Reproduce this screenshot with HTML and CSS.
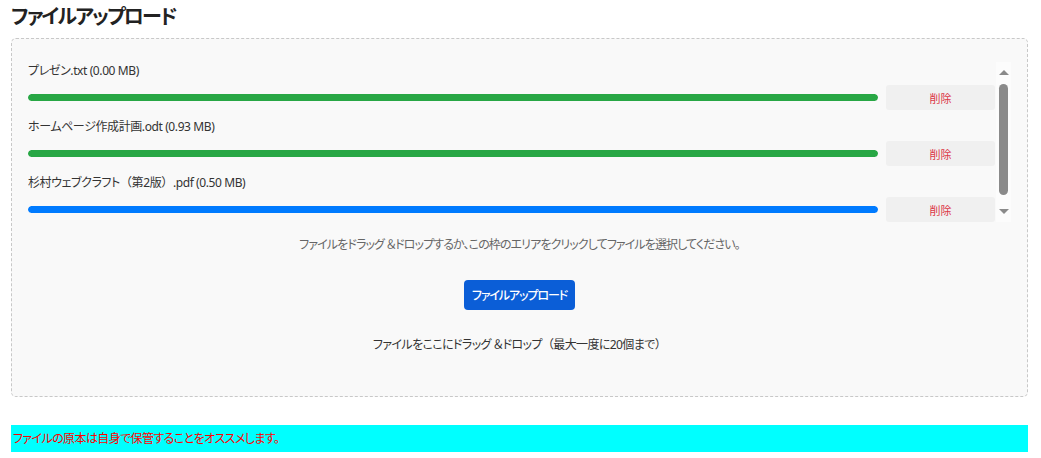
FILE: index.html
```html
<!DOCTYPE html>
<html lang="ja">
<head>
<meta charset="utf-8">
<link rel="stylesheet" href="styles.css">
</head>
<body>
<div class="page">
  <h2 class="title">ファイルアップロード</h2>
  <div class="dropzone">
    <div class="list-wrap">
      <div class="list">
        <div class="file">
          <div class="file-name">プレゼン.txt (0.00 MB)</div>
          <div class="file-row">
            <div class="bar"><div class="bar-fill green" style="width:100%"></div></div>
            <button class="del">削除</button>
          </div>
        </div>
        <div class="file">
          <div class="file-name">ホームページ作成計画.odt (0.93 MB)</div>
          <div class="file-row">
            <div class="bar"><div class="bar-fill green" style="width:100%"></div></div>
            <button class="del">削除</button>
          </div>
        </div>
        <div class="file">
          <div class="file-name">杉村ウェブクラフト<span class="fw">（</span>第2版<span class="fw">）</span>.pdf (0.50 MB)</div>
          <div class="file-row">
            <div class="bar"><div class="bar-fill blue" style="width:100%"></div></div>
            <button class="del">削除</button>
          </div>
        </div>
      </div>
      <div class="scrollbar">
        <div class="arrow up"></div>
        <div class="track"><div class="thumb"></div></div>
        <div class="arrow down"></div>
      </div>
    </div>
    <p class="hint">ファイルをドラッグ ＆ドロップするか、この枠のエリアをクリックしてファイルを選択してください。</p>
    <div class="btn-wrap"><button class="upload">ファイルアップロード</button></div>
    <p class="drop-text">ファイルをここにドラッグ ＆ドロップ<span class="fw">（</span>最大一度に20個まで<span class="fw">）</span></p>
  </div>
  <div class="notice">ファイルの原本は自身で保管することをオススメします。</div>
</div>
</body>
</html>
```

FILE: styles.css
```css
* { box-sizing: border-box; }
html, body { margin: 0; padding: 0; background: #fff; }
body {
  font-family: "Noto Sans", "Noto Sans CJK JP", sans-serif;
  font-feature-settings: "palt" 1;
  color: #333;
}
.fw { font-feature-settings: normal; }
.page {
  width: 1017px;
  margin-left: 11px;
}
.title {
  margin: 2px 0 6px 0;
  font-size: 20px;
  line-height: 30px;
  font-weight: 700;
  color: #222;
  letter-spacing: -1.8px;
}
.dropzone {
  border: 1px dashed #c8c8c8;
  border-radius: 5px;
  background: #f9f9f9;
  padding: 23px 16px 42px 16px;
}
.list-wrap {
  display: flex;
  height: 160px;
}
.list {
  flex: 1;
  overflow: hidden;
}
.file {
  margin-bottom: 8px;
}
.file-name {
  font-size: 12px;
  line-height: 18px;
  margin-bottom: 5px;
  color: #333;
  letter-spacing: -0.4px;
}
.file-row {
  display: flex;
  align-items: center;
  gap: 8px;
  height: 25px;
}
.bar {
  flex: 1;
  height: 7px;
  border-radius: 4px;
  overflow: hidden;
}
.bar-fill { height: 100%; border-radius: 4px; }
.green { background: #28a745; }
.blue { background: #007bff; }
.del {
  width: 109px;
  height: 25px;
  border: none;
  border-radius: 3px;
  background: #f0f0f0;
  color: #dc3545;
  font-family: inherit;
  font-size: 11px;
  padding: 0;
}
.scrollbar {
  width: 15px;
  margin-left: 1px;
  background: #fcfcfc;
  display: flex;
  flex-direction: column;
  align-items: center;
}
.arrow {
  width: 0;
  height: 0;
  border-left: 5px solid transparent;
  border-right: 5px solid transparent;
}
.arrow.up {
  margin-top: 8px;
  border-bottom: 5px solid #8a8a8a;
}
.arrow.down {
  margin-bottom: 8px;
  border-top: 5px solid #8a8a8a;
}
.track {
  flex: 1;
  width: 100%;
  display: flex;
  justify-content: center;
  padding: 9px 0 14px 0;
}
.thumb {
  width: 9px;
  height: 100%;
  background: #8a8a8a;
  border-radius: 5px;
}
.hint {
  margin: 14px 0 0 0;
  text-align: center;
  font-size: 12px;
  line-height: 18px;
  color: #666;
  letter-spacing: -0.9px;
}
.btn-wrap {
  margin-top: 26px;
  display: flex;
  justify-content: center;
}
.upload {
  width: 111px;
  height: 30px;
  border: none;
  border-radius: 4px;
  background: #0b5ed7;
  color: #fff;
  font-family: inherit;
  font-feature-settings: "palt" 1;
  font-size: 12px;
  font-weight: 500;
  letter-spacing: -1.1px;
  white-space: nowrap;
  padding: 0;
}
.drop-text {
  margin: 26px 0 0 0;
  text-align: center;
  font-size: 12px;
  line-height: 18px;
  color: #333;
  letter-spacing: -0.6px;
}
.notice {
  margin-top: 28px;
  height: 27px;
  line-height: 27px;
  background: #00ffff;
  color: #ff0000;
  font-size: 12px;
  padding-left: 2px;
  letter-spacing: -0.6px;
}
```
